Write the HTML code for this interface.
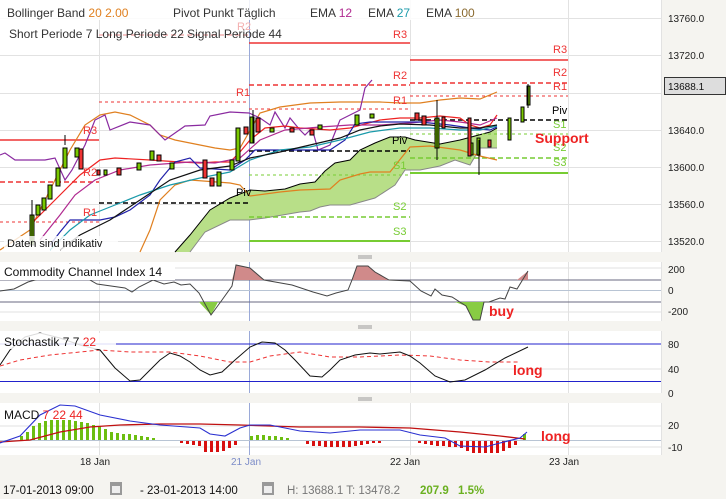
<!DOCTYPE html>
<html><head><meta charset="utf-8"><style>
html,body{margin:0;padding:0;background:#f5f4f0;width:726px;height:499px;overflow:hidden}
svg{display:block;font-family:"Liberation Sans",sans-serif}
</style></head><body>
<svg width="726" height="499" viewBox="0 0 726 499" xmlns="http://www.w3.org/2000/svg">
<rect width="726" height="499" fill="#f5f4f0"/>
<!-- main panel -->
<rect x="0" y="0" width="661" height="252" fill="#fff"/>
<g stroke="#e2e2e2" stroke-width="1">
<line x1="0" y1="18.5" x2="661" y2="18.5"/><line x1="0" y1="55.5" x2="661" y2="55.5"/><line x1="0" y1="93.5" x2="661" y2="93.5"/><line x1="0" y1="130.5" x2="661" y2="130.5"/><line x1="0" y1="167.5" x2="661" y2="167.5"/><line x1="0" y1="204.5" x2="661" y2="204.5"/><line x1="0" y1="241.5" x2="661" y2="241.5"/>
<line x1="99.5" y1="0" x2="99.5" y2="252"/><line x1="410.5" y1="0" x2="410.5" y2="252"/><line x1="568.5" y1="0" x2="568.5" y2="252"/>
<line x1="661.5" y1="0" x2="661.5" y2="252"/>
</g>
<line x1="249.5" y1="0" x2="249.5" y2="252" stroke="#9aa9d8"/>
<!-- cloud -->
<polygon fill="#b8df88" points="175,252 190,235 210,210 230,198 250,190 265,191 285,189 300,184 315,182 325,171 335,163 350,160 360,150 375,143 390,137 405,137 415,140 440,144 460,140 475,136 490,132 497,128 497,148 480,148 470,165 455,160 440,166 420,170 405,170 395,185 375,198 350,205 330,205 320,207 310,211 300,212 265,218 249,220 230,220 205,232 190,252"/>
<polyline fill="none" stroke="#000" stroke-width="1" points="175,252 190,235 210,210 230,198 250,190 265,191 285,189 300,184 315,182 325,171 335,163 350,160 360,150 375,143 390,137 405,137 415,140 440,144 460,140 475,136 490,132 497,128"/>
<polyline fill="none" stroke="#888" stroke-width="1" points="190,252 205,232 230,220 249,220 265,218 300,212 310,211 320,207 330,205 350,205 375,198 395,185 405,170 420,170 440,166 455,160 470,165 480,148 497,148"/>
<!-- pivot levels -->
<g stroke-width="1.5">
<line x1="0" y1="140" x2="99" y2="140" stroke="#e33"/>
<line x1="0" y1="182" x2="99" y2="182" stroke="#e33" stroke-dasharray="5,3"/>
<line x1="0" y1="222" x2="99" y2="222" stroke="#e33" stroke-width="1" stroke-dasharray="3,3"/>
<line x1="99" y1="35" x2="249" y2="35" stroke="#f4b0b0" stroke-dasharray="5,3"/>
<line x1="99" y1="102" x2="249" y2="102" stroke="#e33" stroke-width="1" stroke-dasharray="3,3"/>
<line x1="99" y1="203" x2="249" y2="203" stroke="#000" stroke-dasharray="5,3"/>
<line x1="249" y1="43" x2="410" y2="43" stroke="#e33"/>
<line x1="249" y1="85" x2="410" y2="85" stroke="#e33" stroke-dasharray="5,3"/>
<line x1="249" y1="109" x2="410" y2="109" stroke="#e33" stroke-width="1" stroke-dasharray="3,3"/>
<line x1="249" y1="151" x2="410" y2="151" stroke="#000" stroke-dasharray="5,3"/>
<line x1="249" y1="175" x2="410" y2="175" stroke="#7c3" stroke-width="1" stroke-dasharray="3,3"/>
<line x1="249" y1="217" x2="410" y2="217" stroke="#7c3" stroke-dasharray="5,3"/>
<line x1="249" y1="241" x2="410" y2="241" stroke="#7c3" stroke-width="2"/>
<line x1="410" y1="60" x2="568" y2="60" stroke="#e33"/>
<line x1="410" y1="83" x2="568" y2="83" stroke="#e33" stroke-dasharray="5,3"/>
<line x1="410" y1="96" x2="568" y2="96" stroke="#e33" stroke-width="1" stroke-dasharray="3,3"/>
<line x1="410" y1="120" x2="568" y2="120" stroke="#000" stroke-dasharray="5,3"/>
<line x1="410" y1="134" x2="568" y2="134" stroke="#7c3" stroke-width="1" stroke-dasharray="3,3"/>
<line x1="410" y1="158" x2="568" y2="158" stroke="#7c3" stroke-dasharray="5,3"/>
<line x1="410" y1="173" x2="568" y2="173" stroke="#7c3" stroke-width="2"/>
</g>
<!-- indicator lines -->
<g fill="none" stroke-width="1.2">
<polyline stroke="#e08020" points="0,250 30,230 50,190 70,150 85,125 100,115 115,112 130,115 150,125 160,135 175,140 200,145 215,148 230,150 240,148 260,113 280,107 310,103 340,102 380,102 400,103 420,103 440,100 460,98 480,99 497,92"/>
<polyline stroke="#e08020" points="140,252 150,230 160,200 175,185 190,180 230,183 240,185 250,196 280,192 300,190 330,189 340,180 360,174 370,172 390,172 410,147 430,146 460,150 480,156 497,160"/>
<polyline stroke="#8a2aa0" points="0,155 5,153 15,160 30,160 45,160 55,158 65,180 72,170 85,145 95,120 105,115 110,130 130,122 150,125 165,140 175,133 185,126 205,125 210,116 230,112 249,113 260,118 270,125 275,112 285,128 290,118 300,130 305,135 312,128 318,150 330,145 340,120 350,115 360,110 365,88 372,80"/>
<polyline stroke="#e22" points="30,225 60,195 80,175 100,160 115,158 150,160 180,162 200,163 215,162 230,162 240,152 250,140 265,128 285,126 300,128 330,130 350,128 380,120 400,118 420,118 440,116 460,118 470,125 480,128 490,125 497,115"/>
<polyline stroke="#b02a90" points="40,240 60,215 75,195 95,180 120,170 150,165 190,162 215,163 240,158 260,140 285,130 320,127 350,125 380,125 410,123 440,120 460,122 480,125 497,118"/>
<polyline stroke="#22a" points="50,245 60,232 70,220 100,220 115,217 130,210 150,195 160,180 175,162 190,158 200,168 230,170 245,160 255,150 300,150 330,150 345,140 355,124 370,122 400,122 420,122 450,125 470,128 490,130 497,127"/>
<polyline stroke="#1a9aaa" points="50,250 70,230 90,215 115,205 140,195 170,185 200,178 230,172 250,160 280,150 310,147 340,140 370,132 400,128 430,128 460,130 480,130 497,126"/>
<polyline stroke="#111" points="60,250 80,235 110,220 140,200 170,180 200,170 230,166 250,158 280,152 310,145 340,138 360,130 380,126 400,124 430,125 460,128 480,128 497,125"/>
</g>
<!-- candles -->
<g stroke="#000" stroke-width="1">
<g fill="#7ac800">
<rect x="30" y="215" width="4" height="30"/><rect x="36" y="205" width="4" height="10"/><rect x="42" y="198" width="4" height="12"/><rect x="48" y="185" width="4" height="14"/><rect x="56" y="168" width="4" height="18"/><rect x="63" y="148" width="4" height="20"/><rect x="75" y="148" width="4" height="9"/>
<rect x="104" y="170" width="3" height="5"/><rect x="137" y="163" width="4" height="7"/><rect x="150" y="151" width="4" height="9"/><rect x="170" y="163" width="4" height="6"/><rect x="217" y="172" width="4" height="14"/><rect x="230" y="160" width="4" height="10"/><rect x="236" y="128" width="4" height="33"/><rect x="250" y="117" width="4" height="26"/><rect x="270" y="128" width="4" height="4"/><rect x="318" y="125" width="4" height="4"/><rect x="355" y="115" width="4" height="10"/><rect x="370" y="114" width="4" height="4"/>
<rect x="435" y="118" width="4" height="30"/><rect x="470" y="143" width="3" height="12"/><rect x="477" y="138" width="3" height="17"/><rect x="508" y="118" width="3" height="22"/><rect x="521" y="107" width="3" height="15"/><rect x="527" y="86" width="3" height="19"/>
</g>
<g fill="#e33">
<rect x="79" y="149" width="4" height="20"/><rect x="97" y="170" width="3" height="5"/><rect x="117" y="168" width="4" height="7"/><rect x="157" y="155" width="4" height="6"/><rect x="203" y="160" width="4" height="18"/><rect x="210" y="178" width="4" height="8"/><rect x="244" y="127" width="4" height="7"/><rect x="256" y="118" width="4" height="14"/><rect x="290" y="128" width="4" height="4"/><rect x="310" y="130" width="4" height="5"/>
<rect x="415" y="113" width="4" height="7"/><rect x="422" y="116" width="4" height="9"/><rect x="442" y="117" width="3" height="11"/><rect x="468" y="118" width="3" height="38"/><rect x="488" y="140" width="3" height="7"/>
</g>
<g fill="none"><line x1="32" y1="245" x2="32" y2="200"/><line x1="65" y1="145" x2="65" y2="135"/><line x1="253" y1="110" x2="253" y2="143"/><line x1="479" y1="140" x2="479" y2="175"/><line x1="437" y1="100" x2="437" y2="160"/><line x1="528" y1="84" x2="528" y2="108"/></g>
</g>
<!-- level labels -->
<g font-size="11" fill="#e33">
<text x="83" y="134">R3</text><text x="83" y="176">R2</text><text x="83" y="216">R1</text>
<text x="237" y="30" fill="#f4b0b0">R2</text><text x="236" y="96">R1</text>
<text x="393" y="38">R3</text><text x="393" y="79">R2</text><text x="393" y="104">R1</text>
<text x="553" y="53">R3</text><text x="553" y="76">R2</text><text x="553" y="90">R1</text>
</g>
<g font-size="11" fill="#000"><text x="236" y="196">Piv</text><text x="392" y="144">Piv</text><text x="552" y="114">Piv</text></g>
<g font-size="11" fill="#7c3"><text x="393" y="169">S1</text><text x="393" y="210">S2</text><text x="393" y="235">S3</text><text x="553" y="128">S1</text><text x="553" y="151">S2</text><text x="553" y="166">S3</text></g>
<text x="535" y="143" font-size="14" font-weight="bold" fill="#e22">Support</text>
<!-- header legend -->
<rect x="0" y="0" width="455" height="20" fill="#fff" opacity="0.85"/>
<g font-size="12" fill="#333">
<text x="7" y="17">Bollinger Band <tspan fill="#e08020">20  2.00</tspan></text>
<text x="173" y="17">Pivot Punkt  Täglich</text>
<text x="310" y="17">EMA <tspan fill="#b02a90">12</tspan></text>
<text x="368" y="17">EMA <tspan fill="#1a9aaa">27</tspan></text>
<text x="426" y="17">EMA <tspan fill="#8a6a30">100</tspan></text>
<text x="9" y="38">Short Periode  7   Long Periode  22   Signal Periode  44</text>
</g>
<rect x="4" y="236" width="114" height="14" fill="#fff" opacity="0.8"/>
<text x="7" y="247" font-size="11" fill="#111">Daten sind indikativ</text>
<!-- price axis -->
<g font-size="10" fill="#222"><text x="668" y="22">13760.0</text><text x="668" y="59">13720.0</text><text x="668" y="134">13640.0</text><text x="668" y="171">13600.0</text><text x="668" y="208">13560.0</text><text x="668" y="245">13520.0</text></g>
<rect x="664.5" y="77.5" width="61" height="17" fill="#ddd" stroke="#333"/>
<text x="668" y="90" font-size="10" fill="#111">13688.1</text>
<!-- handles -->
<g stroke="#999"><line x1="358" y1="256" x2="372" y2="256"/><line x1="358" y1="258" x2="372" y2="258"/><line x1="358" y1="326" x2="372" y2="326"/><line x1="358" y1="328" x2="372" y2="328"/><line x1="358" y1="398" x2="372" y2="398"/><line x1="358" y1="400" x2="372" y2="400"/></g>
<!-- CCI -->
<rect x="0" y="262" width="661" height="59" fill="#fff"/>
<g stroke="#e2e2e2"><line x1="0" y1="268" x2="661" y2="268"/><line x1="0" y1="312" x2="661" y2="312"/><line x1="99.5" y1="262" x2="99.5" y2="321"/><line x1="410.5" y1="262" x2="410.5" y2="321"/><line x1="568.5" y1="262" x2="568.5" y2="321"/><line x1="661.5" y1="262" x2="661.5" y2="321"/></g>
<line x1="249.5" y1="262" x2="249.5" y2="321" stroke="#9aa9d8"/>
<line x1="0" y1="280" x2="661" y2="280" stroke="#6a6a80"/>
<line x1="0" y1="290.5" x2="661" y2="290.5" stroke="#b8c4d4"/>
<line x1="0" y1="302" x2="661" y2="302" stroke="#6a6a80"/>
<polygon fill="#f0c8c8" points="42,280 56,272 70,264 83,276 90,280"/>
<polygon fill="#d08a8a" points="232,280 236,265 250,268 264,280"/>
<polygon fill="#d08a8a" points="352,280 357,266 368,266 375,272 389,280"/>
<polygon fill="#d08a8a" points="517,280 528,271 528,280"/>
<polygon fill="#88cc44" points="199,302 211,315 218,302"/>
<polygon fill="#88cc44" points="455,302 466,306 473,320 480,320 484,302"/>
<polyline fill="none" stroke="#444" stroke-width="1" points="0,291 14,289 28,282 42,278 56,272 70,264 83,276 97,284 111,286 125,288 132,292 139,287 153,280 164,284 174,282 181,285 190,284 199,293 211,315 222,300 232,286 236,265 250,268 264,280 292,285 313,292 327,296 336,293 348,290 352,280 357,266 368,266 375,272 389,280 410,281 421,291 431,296 435,289 442,295 452,297 466,306 473,320 480,320 484,302 489,302 500,298 505,299 510,287 517,289 528,271"/>
<rect x="0" y="264" width="175" height="16" fill="#fff"/>
<g font-size="10" fill="#222"><text x="668" y="273">200</text><text x="668" y="294">0</text><text x="668" y="315">-200</text></g>
<text x="4" y="276" font-size="12" fill="#111">Commodity Channel Index  14</text>
<text x="489" y="316" font-size="14" font-weight="bold" fill="#e22">buy</text>
<!-- Stoch -->
<rect x="0" y="331" width="661" height="62" fill="#fff"/>
<g stroke="#e2e2e2"><line x1="0" y1="369" x2="661" y2="369"/><line x1="99.5" y1="331" x2="99.5" y2="393"/><line x1="410.5" y1="331" x2="410.5" y2="393"/><line x1="568.5" y1="331" x2="568.5" y2="393"/><line x1="661.5" y1="331" x2="661.5" y2="393"/></g>
<line x1="249.5" y1="331" x2="249.5" y2="393" stroke="#9aa9d8"/>
<line x1="0" y1="344" x2="661" y2="344" stroke="#22c"/>
<line x1="0" y1="381.5" x2="661" y2="381.5" stroke="#22c"/>
<polyline fill="none" stroke="#e33" stroke-dasharray="4,3" points="0,366 20,360 50,355 80,352 100,350 130,352 170,352 200,356 230,362 250,362 270,356 300,352 330,357 360,357 400,355 430,356 460,360 490,362 520,362"/>
<polyline fill="none" stroke="#111" points="0,365 10,350 25,337 40,333 60,338 80,345 100,350 115,368 130,381 140,380 150,370 160,360 170,353 180,356 190,362 200,370 210,375 222,372 235,360 250,347 262,342 275,343 285,350 295,360 310,376 322,377 330,370 340,360 355,355 370,353 380,354 400,352 410,356 420,363 435,376 450,382 465,380 485,370 505,358 528,347"/>
<rect x="0" y="333" width="116" height="16" fill="#fff" opacity="0.85"/>
<g font-size="10" fill="#222"><text x="668" y="348">80</text><text x="668" y="373">40</text><text x="668" y="397">0</text></g>
<text x="4" y="346" font-size="12" fill="#111">Stochastik  7  7  <tspan fill="#e22">22</tspan></text>
<text x="513" y="375" font-size="14" font-weight="bold" fill="#e22">long</text>
<!-- MACD -->
<rect x="0" y="403" width="661" height="52" fill="#fff"/>
<g stroke="#e2e2e2"><line x1="0" y1="426" x2="661" y2="426"/><line x1="0" y1="447" x2="661" y2="447"/><line x1="99.5" y1="403" x2="99.5" y2="455"/><line x1="410.5" y1="403" x2="410.5" y2="455"/><line x1="568.5" y1="403" x2="568.5" y2="455"/><line x1="661.5" y1="403" x2="661.5" y2="455"/></g>
<line x1="249.5" y1="403" x2="249.5" y2="455" stroke="#9aa9d8"/>
<line x1="0" y1="440.5" x2="661" y2="440.5" stroke="#b8c4d4"/>
<g fill="#6cbe10">
<rect x="20" y="436" width="3" height="4"/><rect x="26" y="432" width="3" height="8"/><rect x="32" y="426" width="3" height="14"/><rect x="38" y="423" width="3" height="17"/><rect x="44" y="421" width="3" height="19"/><rect x="50" y="420" width="3" height="20"/><rect x="56" y="420" width="3" height="20"/><rect x="62" y="420" width="3" height="20"/><rect x="68" y="420" width="3" height="20"/><rect x="74" y="421" width="3" height="19"/><rect x="80" y="422" width="3" height="18"/><rect x="86" y="423" width="3" height="17"/><rect x="92" y="425" width="3" height="15"/><rect x="98" y="426" width="3" height="14"/><rect x="104" y="429" width="3" height="11"/><rect x="110" y="432" width="3" height="8"/><rect x="116" y="433" width="3" height="7"/><rect x="122" y="434" width="3" height="6"/><rect x="128" y="434" width="3" height="6"/><rect x="134" y="435" width="3" height="5"/><rect x="140" y="436" width="3" height="4"/><rect x="146" y="437" width="3" height="3"/><rect x="152" y="438" width="3" height="2"/>
<rect x="250" y="436" width="3" height="4"/><rect x="256" y="435" width="3" height="5"/><rect x="262" y="435" width="3" height="5"/><rect x="268" y="436" width="3" height="4"/><rect x="274" y="436" width="3" height="4"/><rect x="280" y="437" width="3" height="3"/><rect x="286" y="438" width="3" height="2"/><rect x="523" y="434" width="3" height="6"/>
</g>
<g fill="#d81010">
<rect x="180" y="441" width="3" height="2"/><rect x="186" y="441" width="3" height="3"/><rect x="192" y="441" width="3" height="4"/><rect x="198" y="441" width="3" height="5"/><rect x="204" y="441" width="3" height="11"/><rect x="210" y="441" width="3" height="11"/><rect x="216" y="441" width="3" height="11"/><rect x="222" y="441" width="3" height="10"/><rect x="228" y="441" width="3" height="7"/><rect x="234" y="441" width="3" height="4"/>
<rect x="306" y="441" width="3" height="3"/><rect x="312" y="441" width="3" height="5"/><rect x="318" y="441" width="3" height="5"/><rect x="324" y="441" width="3" height="6"/><rect x="330" y="441" width="3" height="6"/><rect x="336" y="441" width="3" height="6"/><rect x="342" y="441" width="3" height="6"/><rect x="348" y="441" width="3" height="6"/><rect x="354" y="441" width="3" height="5"/><rect x="360" y="441" width="3" height="4"/><rect x="366" y="441" width="3" height="3"/><rect x="372" y="441" width="3" height="2"/><rect x="378" y="441" width="3" height="2"/>
<rect x="418" y="441" width="3" height="2"/><rect x="424" y="441" width="3" height="3"/><rect x="430" y="441" width="3" height="4"/><rect x="436" y="441" width="3" height="5"/><rect x="442" y="441" width="3" height="5"/><rect x="448" y="441" width="3" height="6"/><rect x="454" y="441" width="3" height="6"/><rect x="460" y="441" width="3" height="7"/><rect x="466" y="441" width="3" height="10"/><rect x="472" y="441" width="3" height="12"/><rect x="478" y="441" width="3" height="12"/><rect x="484" y="441" width="3" height="12"/><rect x="490" y="441" width="3" height="12"/><rect x="496" y="441" width="3" height="12"/><rect x="502" y="441" width="3" height="10"/><rect x="508" y="441" width="3" height="7"/><rect x="514" y="441" width="3" height="4"/>
</g>
<polyline fill="none" stroke="#c01010" stroke-width="1.3" points="0,442 30,440 60,432 90,427 120,425 160,424 200,424 240,425 300,427 360,427 410,428 460,432 500,436 525,439"/>
<polyline fill="none" stroke="#2a30d0" stroke-width="1.1" points="0,443 20,436 40,415 60,405 75,406 100,415 130,421 160,425 200,428 210,434 225,436 240,428 250,425 270,425 300,431 330,433 360,430 400,430 420,435 445,438 460,446 485,447 500,443 520,438 527,432"/>
<g font-size="10" fill="#222"><text x="668" y="429">20</text><text x="668" y="451">-10</text></g>
<text x="4" y="419" font-size="12" fill="#111">MACD  <tspan fill="#e22">7  22  44</tspan></text>
<text x="541" y="441" font-size="14" font-weight="bold" fill="#e22">long</text>
<!-- x axis -->
<g font-size="10" fill="#222"><text x="80" y="465">18 Jan</text><text x="390" y="465">22 Jan</text><text x="549" y="465">23 Jan</text></g>
<text x="231" y="465" font-size="10" fill="#7c8cc8">21 Jan</text>
<!-- footer -->
<g font-size="11.5"><text x="3" y="494" fill="#111">17-01-2013 09:00</text>
<text x="140" y="494" fill="#111">-   23-01-2013 14:00</text>
<text x="287" y="494" fill="#777">H: 13688.1   T: 13478.2</text>
<text x="420" y="494" fill="#6ab020" font-weight="bold">207.9</text><text x="458" y="494" fill="#6ab020" font-weight="bold">1.5%</text></g>
<g fill="#999"><rect x="110" y="482" width="12" height="13"/><rect x="262" y="482" width="12" height="13"/></g>
<g fill="#eee"><rect x="112" y="486" width="8" height="7"/><rect x="264" y="486" width="8" height="7"/></g>
</svg>
</body></html>
